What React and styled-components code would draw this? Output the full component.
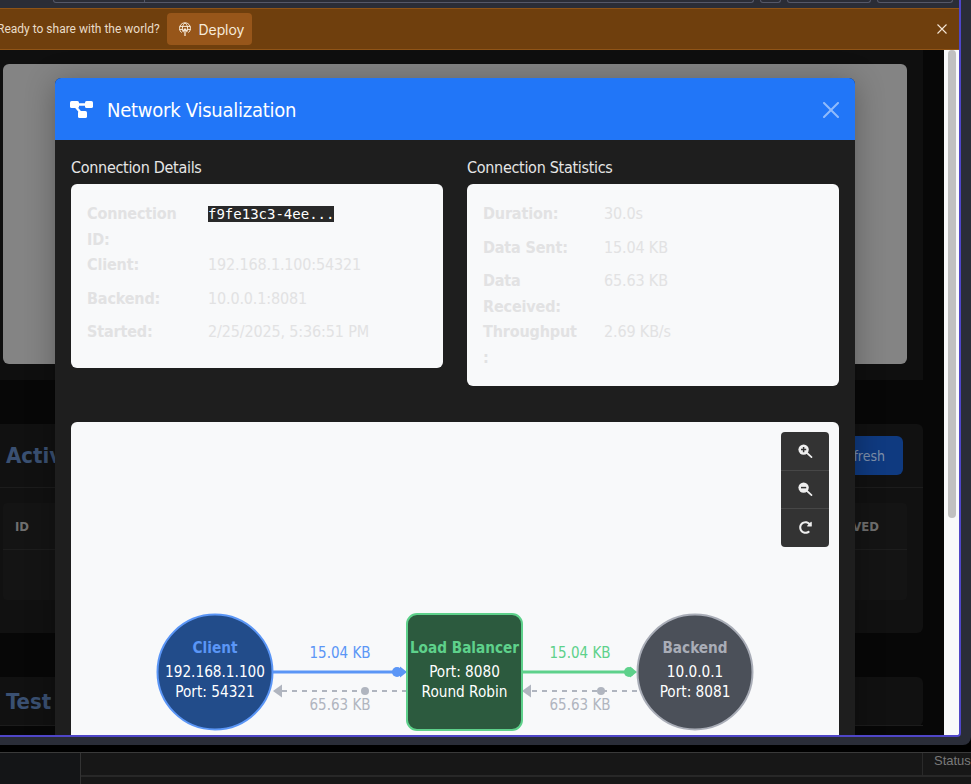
import React from "react";
import styled, { createGlobalStyle } from "styled-components";
import { FaRedoAlt } from "react-icons/fa";

const GlobalStyle = createGlobalStyle`
  html, body { margin: 0; padding: 0; background: #000; height: 784px; overflow: hidden; }
  * { box-sizing: border-box; }
`;

const FONT = `"DejaVu Sans Condensed", "Noto Sans", "Liberation Sans", sans-serif`;

const Page = styled.div`
  width: 971px;
  height: 784px;
  overflow: hidden;
  display: flex;
  flex-direction: column;
  font-family: ${FONT};
`;
const Window = styled.div`
  height: 745px;
  flex: none;
  background: #2a2d38;
  padding-right: 10px;
  border-bottom-right-radius: 8px;
`;
const Frame = styled.div`
  position: relative;
  height: 737px;
  overflow: hidden;
  border-right: 2px solid #4f46c8;
  border-bottom: 2px solid #4f46c8;
  border-bottom-right-radius: 4px;
  background: #f8f9fa;
  display: flex;
  flex-direction: column;
`;
const TopBar = styled.div`
  height: 8px;
  flex: none;
  background: #2b2d36;
  display: flex;
  padding-left: 53px;
  gap: 6px;
`;
const TopField = styled.div`
  width: ${(p) => p.$w}px;
  height: 3px;
  border: 1px solid #555868;
  border-top: none;
  border-radius: 0 0 4px 4px;
`;
const TopDivider = styled.span`
  display: block;
  width: 1px;
  height: 3px;
  background: #555868;
  margin-left: 90px;
`;
const Banner = styled.div`
  height: 42px;
  flex: none;
  background: #6f3f0d;
  border-top: 1px solid #8f5417;
  border-bottom: 1px solid #8f5417;
  display: flex;
  align-items: center;
  padding-right: 12px;
  gap: 7px;
`;
const BannerText = styled.span`
  margin-left: -3px;
  font-family: "Roboto", "Noto Sans", sans-serif;
  font-size: 12px;
  color: #e9dcc8;
  white-space: nowrap;
`;
const DeployButton = styled.button`
  height: 32px;
  width: 85px;
  border: none;
  border-radius: 4px;
  background: #97561a;
  color: #f6ead9;
  font-family: "Inter", "Noto Sans", sans-serif;
  font-size: 14px;
  letter-spacing: -0.1px;
  display: flex;
  align-items: center;
  gap: 7px;
  padding: 0 0 0 11px;
`;
const BannerClose = styled.button`
  margin-left: auto;
  border: none;
  padding: 0;
  background: none;
  color: #f5e6d5;
  display: flex;
`;
const Main = styled.div`
  flex: 1;
  min-height: 0;
  display: flex;
`;
const Content = styled.div`
  width: 944px;
  flex: none;
  background: #070707;
`;
const TopSection = styled.section`
  width: 923px;
  height: 330px;
  padding: 14px 0 0 3px;
  background: #0f0f0f;
`;
const GrayPanel = styled.div`
  width: 904px;
  height: 300px;
  background: #848484;
  border-radius: 6px;
`;
const Card = styled.section`
  display: flow-root;
  width: 923px;
  margin-top: 44px;
  background: #111;
  border-radius: 0 6px 6px 0;
`;
const CardHeader = styled.div`
  height: ${(p) => p.$h}px;
  padding: 0 20px 0 6px;
  border-bottom: 1px solid #1c1c1c;
  display: flex;
  align-items: center;
  justify-content: space-between;
`;
const CardTitle = styled.h2`
  margin: 0;
  font-size: 22px;
  font-weight: 700;
  color: #3a5072;
`;
const RefreshButton = styled.button`
  height: 39px;
  width: 113px;
  border: none;
  border-radius: 6px;
  background: #0f3a80;
  color: #7f90aa;
  font-family: ${FONT};
  font-size: 14px;
  text-align: right;
  padding: 0 18px 0 0;
`;
const Table = styled.div`
  width: 904px;
  height: 97px;
  margin: 15px 0 33px 3px;
  background: #141414;
  border-radius: 4px;
`;
const TableHead = styled.div`
  height: 47px;
  padding: 0 28px 0 12px;
  border-bottom: 1px solid #1d1d1d;
  display: flex;
  align-items: center;
  justify-content: space-between;
  font-size: 13px;
  font-weight: 700;
  color: #6f6f6f;
`;
const ScrollTrack = styled.div`
  flex: 1;
  padding: 0 3px 0 4px;
  background: #f8f9fa;
`;
const ScrollThumb = styled.div`
  width: 8px;
  height: 468px;
  background: #c0c0c0;
  border-radius: 4px;
`;

const Modal = styled.div`
  position: absolute;
  left: 55px;
  top: 78px;
  width: 800px;
  height: 700px;
  background: #1e1e1e;
  border-radius: 6px 6px 0 0;
  box-shadow: 0 4px 30px rgba(0, 0, 0, 0.3);
`;
const ModalHeader = styled.header`
  height: 62px;
  padding: 1px 16px 0 15px;
  background: #2176f8;
  border-radius: 6px 6px 0 0;
  display: flex;
  align-items: center;
  gap: 14px;
  color: #fff;
`;
const ModalTitle = styled.h1`
  margin: 0;
  font-size: 20px;
  font-weight: 400;
  letter-spacing: -0.25px;
`;
const ModalClose = styled.button`
  margin-left: auto;
  border: none;
  padding: 0;
  background: none;
  color: #fff;
  opacity: 0.5;
  display: flex;
`;
const ModalBody = styled.div`
  padding: 16px;
`;
const InfoGrid = styled.div`
  display: grid;
  grid-template-columns: 372px 372px;
  column-gap: 24px;
  align-items: start;
  margin-bottom: 36.4px;
`;
const InfoTitle = styled.h3`
  margin: 0 0 4px;
  height: 24px;
  line-height: 24px;
  font-size: 16px;
  font-weight: 400;
  letter-spacing: -0.3px;
  color: #e6e6e6;
`;
const InfoCard = styled.dl`
  margin: 0;
  padding: 17px 16px 15px;
  background: #f8f9fa;
  border-radius: 6px;
  display: grid;
  grid-template-columns: 97px 1fr;
  column-gap: 24px;
  line-height: 1.6;
  font-size: 16px;
  letter-spacing: -0.15px;
  color: #e2e2e3;
`;
const Label = styled.dt`
  font-weight: 700;
`;
const Value = styled.dd`
  margin: 0 0 8px;
`;
const Code = styled.code`
  font-family: "DejaVu Sans Mono", monospace;
  font-size: 14px;
  letter-spacing: 0;
  color: #fff;
  background: #292929;
`;
const VizPanel = styled.div`
  position: relative;
  height: 400px;
  background: #f8f9fa;
  border-radius: 6px;
`;
const ZoomControls = styled.div`
  position: absolute;
  top: 10px;
  right: 10px;
  width: 48px;
  background: #333;
  border-radius: 4px;
  display: flex;
  flex-direction: column;
`;
const ZoomButton = styled.button`
  height: 38px;
  border: none;
  border-bottom: 1px solid #474747;
  background: none;
  color: #eee;
  padding: 0;
  display: flex;
  align-items: center;
  justify-content: center;
  &:first-child { height: 39px; }
  &:last-child { border-bottom: none; }
`;
const Diagram = styled.svg`
  display: block;
  font-family: ${FONT};
`;

const CloseGlyph = ({ size }) => (
  <svg width={size} height={size} viewBox="0 0 16 16" fill="currentColor">
    <path d="M.293.293a1 1 0 0 1 1.414 0L8 6.586 14.293.293a1 1 0 1 1 1.414 1.414L9.414 8l6.293 6.293a1 1 0 0 1-1.414 1.414L8 9.414l-6.293 6.293a1 1 0 0 1-1.414-1.414L6.586 8 .293 1.707a1 1 0 0 1 0-1.414z" />
  </svg>
);

const ThinClose = () => (
  <svg width="10" height="10" viewBox="0 0 10 10" stroke="currentColor" strokeWidth="1.1">
    <path d="M.5.5l9 9M9.5.5l-9 9" />
  </svg>
);

const DeployGlyph = () => (
  <svg width="14" height="14" viewBox="0 0 14 14" fill="none" stroke="currentColor" strokeWidth="1">
    <path d="M3.6 10.6A5.5 5.5 0 1 1 10.4 10.6" />
    <path d="M1.6 4.4h10.8M1.4 7.4h3.6M9 7.4h3.6" />
    <path d="M5.4 10.2C3.6 6.8 4.4 2.6 7 1c2.6 1.6 3.4 5.8 1.6 9.2" />
    <path d="M7 14V7M4.8 9.2 7 7l2.2 2.2" strokeWidth="1.3" />
  </svg>
);

const DiagramGlyph = () => (
  <svg width="23" height="17" viewBox="0 0 23 17" fill="#fff" stroke="#fff">
    <path d="M4 3.5h15M5 5l6.5 7.5" strokeWidth="2.4" fill="none" />
    <rect x="0" y="0" width="9" height="7" rx="1.6" stroke="none" />
    <rect x="15" y="0" width="8" height="7" rx="1.6" stroke="none" />
    <rect x="8" y="10" width="9" height="7" rx="1.6" stroke="none" />
  </svg>
);

// magnifier with a solid lens, plus adds the upright bar of the sign
const ZoomGlyph = ({ plus }) => (
  <svg width="15" height="14" viewBox="0 0 15 14">
    <path d="M8.5 8.5l5 4.6" stroke="#eee" strokeWidth="1.7" strokeLinecap="round" />
    <circle cx="5.6" cy="5.6" r="5.2" fill="#eee" />
    <path d={plus ? "M3 5.6h5.2M5.6 3v5.2" : "M3 5.6h5.2"} stroke="#333" strokeWidth="1.5" />
  </svg>
);

// one traffic link between two nodes, x values are where the link starts and ends
const Link = ({ from, to, color, dotX, dashDotX, centerX }) => (
  <g>
    <line x1={from} y1="250" x2={to - 6} y2="250" stroke={color} strokeWidth="3" />
    <path d={`M${to - 7} 244.5 L${to} 250 L${to - 7} 255.5 Z`} fill={color} />
    <circle cx={dotX} cy="250" r="5" fill={color} />
    <text x={centerX} y="236" textAnchor="middle" fontSize="15" fill={color}>15.04 KB</text>
    <line x1={to} y1="269" x2={from + 9} y2="269" stroke="#b0b5bf" strokeWidth="2" strokeDasharray="5 5" />
    <path d={`M${from + 9} 262.5 L${from} 269 L${from + 9} 275.5 Z`} fill="#b0b5bf" />
    <circle cx={dashDotX} cy="269" r="4" fill="#b0b5bf" />
    <text x={centerX} y="288" textAnchor="middle" fontSize="15" fill="#b0b5bf">65.63 KB</text>
  </g>
);

const NodeText = ({ x, title, color, lines }) => (
  <g textAnchor="middle">
    <text x={x} y="231" fontSize="15.2" fontWeight="700" fill={color}>{title}</text>
    <text x={x} y="255" fontSize="15.2" fill="#fff">{lines[0]}</text>
    <text x={x} y="275" fontSize="15.2" fill="#fff">{lines[1]}</text>
  </g>
);

const StatusRow = styled.div`
  flex: 1;
  margin-top: 7px;
  border-top: 1px solid #3a3a3a;
  display: grid;
  grid-template-columns: 81px 1fr 48px;
  background: #171717;
`;
const LeftPane = styled.div`
  background: #141517;
  border-right: 1px solid #333;
`;
const CenterPane = styled.div`
  height: 24px;
  border-bottom: 2px solid #282828;
  border-right: 1px solid #2a2a2a;
`;
const StatusLabel = styled.div`
  padding: 0 0 0 11px;
  height: 24px;
  line-height: 16px;
  font-family: "Liberation Sans", sans-serif;
  font-size: 13px;
  color: #7a7a7a;
  border-bottom: 2px solid #282828;
`;

export default function App() {
  return (
    <Page>
      <GlobalStyle />
      <Window>
        <Frame>
          <TopBar>
            <TopField $w={701}><TopDivider /></TopField>
            <TopField $w={21} />
            <TopField $w={84} />
            <TopField $w={76} />
          </TopBar>
          <Banner>
            <BannerText>Ready to share with the world?</BannerText>
            <DeployButton>
              <DeployGlyph />
              Deploy
            </DeployButton>
            <BannerClose><ThinClose /></BannerClose>
          </Banner>
          <Main>
            <Content>
              <TopSection>
                <GrayPanel />
              </TopSection>
              <Card>
                <CardHeader $h={64}>
                  <CardTitle>Active Connections</CardTitle>
                  <RefreshButton>Refresh</RefreshButton>
                </CardHeader>
                <Table>
                  <TableHead>
                    <span>ID</span>
                    <span>BYTES RECEIVED</span>
                  </TableHead>
                </Table>
              </Card>
              <Card>
                <CardHeader $h={49}>
                  <CardTitle>Test Connection</CardTitle>
                </CardHeader>
              </Card>
            </Content>
            <ScrollTrack>
              <ScrollThumb />
            </ScrollTrack>
          </Main>

          <Modal>
            <ModalHeader>
              <DiagramGlyph />
              <ModalTitle>Network Visualization</ModalTitle>
              <ModalClose><CloseGlyph size={16} /></ModalClose>
            </ModalHeader>
            <ModalBody>
              <InfoGrid>
                <div>
                  <InfoTitle>Connection Details</InfoTitle>
                  <InfoCard>
                    <Label>Connection ID:</Label>
                    <Value><Code>f9fe13c3-4ee...</Code></Value>
                    <Label>Client:</Label>
                    <Value>192.168.1.100:54321</Value>
                    <Label>Backend:</Label>
                    <Value>10.0.0.1:8081</Value>
                    <Label>Started:</Label>
                    <Value>2/25/2025, 5:36:51 PM</Value>
                  </InfoCard>
                </div>
                <div>
                  <InfoTitle>Connection Statistics</InfoTitle>
                  <InfoCard>
                    <Label>Duration:</Label>
                    <Value>30.0s</Value>
                    <Label>Data Sent:</Label>
                    <Value>15.04 KB</Value>
                    <Label>Data Received:</Label>
                    <Value>65.63 KB</Value>
                    <Label>Throughput<wbr />:</Label>
                    <Value>2.69 KB/s</Value>
                  </InfoCard>
                </div>
              </InfoGrid>
              <VizPanel>
                <ZoomControls>
                  <ZoomButton><ZoomGlyph plus /></ZoomButton>
                  <ZoomButton><ZoomGlyph /></ZoomButton>
                  <ZoomButton><FaRedoAlt size={13} /></ZoomButton>
                </ZoomControls>
                <Diagram width="768" height="400" viewBox="0 0 768 400">
                  <Link from={202} to={336} color="#5b96f6" dotX={326} dashDotX={294} centerX={269} />
                  <Link from={451} to={566} color="#5ed18b" dotX={558} dashDotX={530} centerX={509} />
                  <circle cx="144" cy="250" r="57.5" fill="#224c8a" stroke="#5b96f6" strokeWidth="2" />
                  <rect x="336" y="192" width="115" height="116" rx="10" fill="#2c5a3e" stroke="#5ed18b" strokeWidth="2" />
                  <circle cx="624" cy="250" r="57.5" fill="#4b5059" stroke="#a9adb7" strokeWidth="2" />
                  <NodeText x={144} title="Client" color="#5b96f6" lines={["192.168.1.100", "Port: 54321"]} />
                  <NodeText x={393.5} title="Load Balancer" color="#5ed18b" lines={["Port: 8080", "Round Robin"]} />
                  <NodeText x={624} title="Backend" color="#a9adb7" lines={["10.0.0.1", "Port: 8081"]} />
                </Diagram>
              </VizPanel>
            </ModalBody>
          </Modal>
        </Frame>
      </Window>
      <StatusRow>
        <LeftPane />
        <CenterPane />
        <StatusLabel>Status</StatusLabel>
      </StatusRow>
    </Page>
  );
}
